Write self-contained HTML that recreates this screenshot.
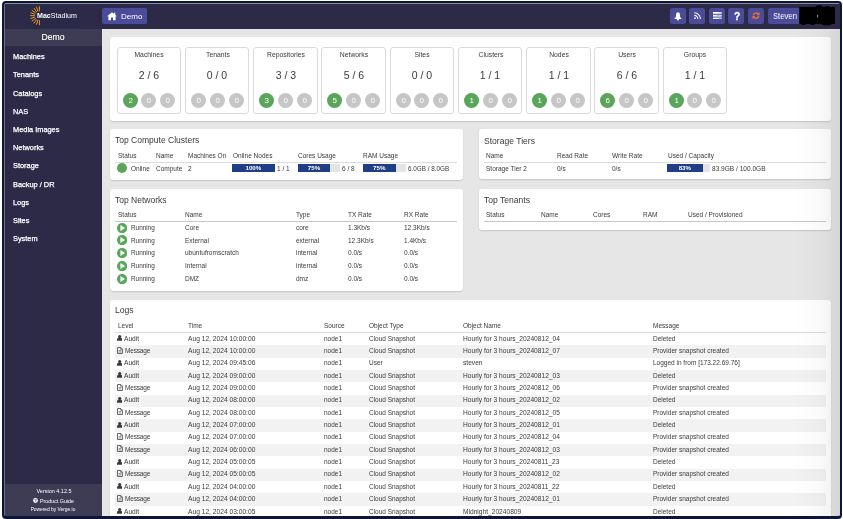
<!DOCTYPE html>
<html><head><meta charset="utf-8">
<style>
*{margin:0;padding:0;box-sizing:border-box}
html,body{width:843px;height:519px;overflow:hidden;background:#fff;font-family:"Liberation Sans",sans-serif}
.t,.circ{will-change:transform}
.a{position:absolute}
.t{position:absolute;white-space:nowrap;line-height:1}
.circ{width:15.4px;height:15.4px;border-radius:50%;color:#fff;font-size:8px;text-align:center;line-height:15.4px}
#frame{position:absolute;left:2px;top:1px;width:840px;height:518px;border:2.3px solid #0c1638;border-bottom-width:3px;border-radius:4px;box-shadow:0 0 0 12px #fff;z-index:50}
</style></head><body>
<div class="a" style="left:3.00px;top:2.00px;width:838.00px;height:516.00px;background:#e6e6e6;"></div>
<div class="a" style="left:4.00px;top:3.00px;width:836.00px;height:25.50px;background:#2d2a47;"></div>
<div class="a" style="left:4.00px;top:3.00px;width:836.00px;height:1.00px;background:#8c8c9c;"></div>
<div class="a" style="left:4.00px;top:28.50px;width:98.00px;height:488.00px;background:#2d2a47;"></div>
<div class="a" style="left:4.00px;top:29.00px;width:98.00px;height:17.00px;background:#3e3b55;"></div>
<div class="a" style="left:4.00px;top:484.00px;width:98.00px;height:33.00px;background:#3e3b55;"></div>
<div class="a" style="left:4.00px;top:3.00px;width:1.00px;height:514.00px;background:#70707e;"></div>
<div class="a" style="left:28.50px;top:4.50px;width:49.50px;height:23.00px;background:#2a2947;"></div>
<svg class="a" style="will-change:transform;left:0.00px;top:0.00px" width="60" height="30" viewBox="0 0 60 30"><line x1="39.40" y1="10.80" x2="39.40" y2="6.70" stroke="#f0a022" stroke-width="0.95" stroke-linecap="round"/><line x1="37.89" y1="11.04" x2="36.62" y2="7.14" stroke="#f0a022" stroke-width="0.95" stroke-linecap="round"/><line x1="36.52" y1="11.74" x2="34.11" y2="8.42" stroke="#f0a022" stroke-width="0.95" stroke-linecap="round"/><line x1="35.44" y1="12.82" x2="32.12" y2="10.41" stroke="#f0a022" stroke-width="0.95" stroke-linecap="round"/><line x1="34.74" y1="14.19" x2="30.84" y2="12.92" stroke="#f0a022" stroke-width="0.95" stroke-linecap="round"/><line x1="34.50" y1="15.70" x2="30.40" y2="15.70" stroke="#f0a022" stroke-width="0.95" stroke-linecap="round"/><line x1="34.74" y1="17.21" x2="30.84" y2="18.48" stroke="#f0a022" stroke-width="0.95" stroke-linecap="round"/><line x1="35.44" y1="18.58" x2="32.12" y2="20.99" stroke="#f0a022" stroke-width="0.95" stroke-linecap="round"/><line x1="36.52" y1="19.66" x2="34.11" y2="22.98" stroke="#f0a022" stroke-width="0.95" stroke-linecap="round"/><line x1="37.89" y1="20.36" x2="36.62" y2="24.26" stroke="#f0a022" stroke-width="0.95" stroke-linecap="round"/><line x1="39.40" y1="20.60" x2="39.40" y2="24.70" stroke="#f0a022" stroke-width="0.95" stroke-linecap="round"/></svg>
<div class="t" style="left:36.50px;top:13.00px;font-size:7.1px;color:#fff;"><b>Mac</b>Stadium</div>
<div class="a" style="left:102.00px;top:8.00px;width:45.00px;height:16.00px;background:#4a4c9a;border-radius:2px;"></div>
<svg class="a" style="will-change:transform;left:106.50px;top:11.50px" width="10" height="8.5" viewBox="0 0 10 8.5"><path d="M5 0.3 L0.2 4.3 L1.4 4.3 L1.4 8.3 L4 8.3 L4 5.6 L6 5.6 L6 8.3 L8.6 8.3 L8.6 4.3 L9.8 4.3 Z" fill="#fff"/><rect x="6.9" y="0.8" width="1.4" height="2.4" fill="#fff"/></svg>
<div class="t" style="left:120.80px;top:13.00px;font-size:8.0px;color:#fff;">Demo</div>
<div class="a" style="left:670.00px;top:8.00px;width:16.00px;height:16.00px;background:#4a4c9a;border-radius:2.5px;"></div>
<div class="a" style="left:689.20px;top:8.00px;width:16.00px;height:16.00px;background:#4a4c9a;border-radius:2.5px;"></div>
<div class="a" style="left:708.80px;top:8.00px;width:16.00px;height:16.00px;background:#4a4c9a;border-radius:2.5px;"></div>
<div class="a" style="left:728.40px;top:8.00px;width:16.00px;height:16.00px;background:#4a4c9a;border-radius:2.5px;"></div>
<div class="a" style="left:748.00px;top:8.00px;width:16.00px;height:16.00px;background:#4a4c9a;border-radius:2.5px;"></div>
<svg class="a" style="will-change:transform;left:674.20px;top:11.60px" width="8" height="8.6" viewBox="0 0 8 8.6"><path d="M4 0.2 C2.9 0.2 2.2 1.1 2.1 2.5 L1.9 4.6 C1.7 5.5 0.9 6.2 0.2 6.9 L7.8 6.9 C7.1 6.2 6.3 5.5 6.1 4.6 L5.9 2.5 C5.8 1.1 5.1 0.2 4 0.2 Z" fill="#fff"/><circle cx="4" cy="7.4" r="1.05" fill="#fff"/></svg>
<svg class="a" style="will-change:transform;left:693.80px;top:11.80px" width="7.2" height="7.2" viewBox="0 0 7.2 7.2"><circle cx="1" cy="6.1" r="0.95" fill="#fff"/><path d="M0.3 3.4 A3.4 3.4 0 0 1 3.8 6.9" stroke="#fff" stroke-width="1.1" fill="none"/><path d="M0.3 0.8 A6 6 0 0 1 6.4 6.9" stroke="#fff" stroke-width="1.1" fill="none"/></svg>
<svg class="a" style="will-change:transform;left:712.80px;top:12.00px" width="8.6" height="7.4" viewBox="0 0 8.6 7.4"><rect x="0" y="0" width="8.6" height="1.8" fill="#fff"/><rect x="0" y="2.8" width="8.6" height="1.8" fill="#fff"/><rect x="0" y="5.6" width="8.6" height="1.8" fill="#fff"/><rect x="5.6" y="0.4" width="2.4" height="1" fill="#b8b8e0"/><rect x="3.4" y="3.2" width="4.6" height="1" fill="#b8b8e0"/><rect x="5.6" y="6" width="2.4" height="1" fill="#b8b8e0"/></svg>
<div class="t" style="left:733.60px;top:12.00px;font-size:10.2px;color:#fff;font-weight:bold;-webkit-text-stroke:0.3px #fff;">?</div>
<svg class="a" style="will-change:transform;left:752.40px;top:12.20px" width="8" height="7.4" viewBox="0 0 8 7.4"><path d="M1.2 3.2 A3 3 0 0 1 6.4 2.2" stroke="#e8742c" stroke-width="1.4" fill="none"/><path d="M6.8 4.2 A3 3 0 0 1 1.6 5.2" stroke="#e8742c" stroke-width="1.4" fill="none"/><path d="M7.6 0.3 L7.6 3.3 L4.6 3.3 Z" fill="#e8742c"/><path d="M0.4 7.1 L0.4 4.1 L3.4 4.1 Z" fill="#e8742c"/></svg>
<div class="a" style="left:767.80px;top:8.00px;width:34.00px;height:16.00px;background:#4a4c9a;border-radius:2.5px;"></div>
<div class="t" style="left:772.80px;top:12.00px;font-size:8.8px;color:#fff;transform:scaleX(0.875);transform-origin:0 0;">Steven</div>
<svg class="a" style="will-change:transform;left:795.00px;top:2.00px" width="45" height="26" viewBox="0 0 45 26"><rect x="4.2" y="5" width="35.8" height="17" fill="#000"/><ellipse cx="24" cy="5.3" rx="3.6" ry="2" fill="#000"/><ellipse cx="32.2" cy="5.3" rx="2" ry="1.2" fill="#000"/><ellipse cx="8.5" cy="22" rx="2.4" ry="0.9" fill="#000"/><ellipse cx="17.5" cy="22" rx="2.4" ry="0.9" fill="#000"/><ellipse cx="31.5" cy="22.2" rx="5" ry="1.3" fill="#000"/><rect x="22.2" y="12.8" width="0.9" height="2.6" fill="#aaa"/></svg>
<div class="t" style="left:-46.80px;width:200px;text-align:center;top:33.00px;font-size:8.6px;color:#fff;-webkit-text-stroke:0.15px #fff;">Demo</div>
<div class="t" style="left:13.40px;top:53.00px;font-size:7.4px;color:#fff;-webkit-text-stroke:0.25px #fff;">Machines</div>
<div class="t" style="left:13.40px;top:71.00px;font-size:7.4px;color:#fff;-webkit-text-stroke:0.25px #fff;">Tenants</div>
<div class="t" style="left:13.40px;top:90.00px;font-size:7.4px;color:#fff;-webkit-text-stroke:0.25px #fff;">Catalogs</div>
<div class="t" style="left:13.40px;top:108.00px;font-size:7.4px;color:#fff;-webkit-text-stroke:0.25px #fff;">NAS</div>
<div class="t" style="left:13.40px;top:126.00px;font-size:7.4px;color:#fff;-webkit-text-stroke:0.25px #fff;">Media Images</div>
<div class="t" style="left:13.40px;top:144.00px;font-size:7.4px;color:#fff;-webkit-text-stroke:0.25px #fff;">Networks</div>
<div class="t" style="left:13.40px;top:162.00px;font-size:7.4px;color:#fff;-webkit-text-stroke:0.25px #fff;">Storage</div>
<div class="t" style="left:13.40px;top:181.00px;font-size:7.4px;color:#fff;-webkit-text-stroke:0.25px #fff;">Backup / DR</div>
<div class="t" style="left:13.40px;top:199.00px;font-size:7.4px;color:#fff;-webkit-text-stroke:0.25px #fff;">Logs</div>
<div class="t" style="left:13.40px;top:217.00px;font-size:7.4px;color:#fff;-webkit-text-stroke:0.25px #fff;">Sites</div>
<div class="t" style="left:13.40px;top:235.00px;font-size:7.4px;color:#fff;-webkit-text-stroke:0.25px #fff;">System</div>
<div class="t" style="left:-46.50px;width:200px;text-align:center;top:489.00px;font-size:5.47px;color:#fff;">Version 4.12.5</div>
<svg class="a" style="will-change:transform;left:32.50px;top:498.20px" width="5" height="5" viewBox="0 0 5 5"><circle cx="2.5" cy="2.5" r="2.4" fill="#fff"/><text x="2.5" y="4.2" font-size="4.3" font-weight="bold" text-anchor="middle" fill="#3e3b55" font-family="Liberation Sans">?</text></svg>
<div class="t" style="left:39.90px;top:499.00px;font-size:5.32px;color:#fff;">Product Guide</div>
<div class="t" style="left:-46.70px;width:200px;text-align:center;top:508.00px;font-size:4.85px;color:#fff;">Powered by Verge.io</div>
<div class="a" style="left:110.00px;top:37.00px;width:721.00px;height:84.00px;background:#fff;border-radius:3px;box-shadow:0 1px 1.5px rgba(0,0,0,.14);"></div>
<div class="a" style="left:110.00px;top:129.00px;width:353.00px;height:51.00px;background:#fff;border-radius:3px;box-shadow:0 1px 1.5px rgba(0,0,0,.14);"></div>
<div class="a" style="left:479.00px;top:129.00px;width:352.00px;height:50.00px;background:#fff;border-radius:3px;box-shadow:0 1px 1.5px rgba(0,0,0,.14);"></div>
<div class="a" style="left:110.00px;top:189.00px;width:353.00px;height:102.00px;background:#fff;border-radius:3px;box-shadow:0 1px 1.5px rgba(0,0,0,.14);"></div>
<div class="a" style="left:479.00px;top:189.00px;width:352.00px;height:41.00px;background:#fff;border-radius:3px;box-shadow:0 1px 1.5px rgba(0,0,0,.14);"></div>
<div class="a" style="left:110.00px;top:299.50px;width:721.00px;height:240.00px;background:#fff;border-radius:3px;box-shadow:0 1px 1.5px rgba(0,0,0,.14);"></div>
<div class="a" style="left:116.65px;top:46.90px;width:64.40px;height:66.70px;background:#fff;border:1px solid #dadada;border-radius:3px;"></div>
<div class="t" style="left:49.25px;width:200px;text-align:center;top:52.00px;font-size:6.8px;color:#3a3a3a;">Machines</div>
<div class="t" style="left:49.15px;width:200px;text-align:center;top:70.00px;font-size:10.5px;color:#3a3a3a;">2 / 6</div>
<div class="a circ" style="left:122.60px;top:92.5px;background:#5aa55a">2</div>
<div class="a circ" style="left:141.30px;top:92.5px;background:#c6c6c6">0</div>
<div class="a circ" style="left:160.30px;top:92.5px;background:#c6c6c6">0</div>
<div class="a" style="left:184.90px;top:46.90px;width:64.40px;height:66.70px;background:#fff;border:1px solid #dadada;border-radius:3px;"></div>
<div class="t" style="left:117.50px;width:200px;text-align:center;top:52.00px;font-size:6.8px;color:#3a3a3a;">Tenants</div>
<div class="t" style="left:117.40px;width:200px;text-align:center;top:70.00px;font-size:10.5px;color:#3a3a3a;">0 / 0</div>
<div class="a circ" style="left:190.85px;top:92.5px;background:#c6c6c6">0</div>
<div class="a circ" style="left:209.55px;top:92.5px;background:#c6c6c6">0</div>
<div class="a circ" style="left:228.55px;top:92.5px;background:#c6c6c6">0</div>
<div class="a" style="left:253.15px;top:46.90px;width:64.40px;height:66.70px;background:#fff;border:1px solid #dadada;border-radius:3px;"></div>
<div class="t" style="left:185.75px;width:200px;text-align:center;top:52.00px;font-size:6.8px;color:#3a3a3a;">Repositories</div>
<div class="t" style="left:185.65px;width:200px;text-align:center;top:70.00px;font-size:10.5px;color:#3a3a3a;">3 / 3</div>
<div class="a circ" style="left:259.10px;top:92.5px;background:#5aa55a">3</div>
<div class="a circ" style="left:277.80px;top:92.5px;background:#c6c6c6">0</div>
<div class="a circ" style="left:296.80px;top:92.5px;background:#c6c6c6">0</div>
<div class="a" style="left:321.40px;top:46.90px;width:64.40px;height:66.70px;background:#fff;border:1px solid #dadada;border-radius:3px;"></div>
<div class="t" style="left:254.00px;width:200px;text-align:center;top:52.00px;font-size:6.8px;color:#3a3a3a;">Networks</div>
<div class="t" style="left:253.90px;width:200px;text-align:center;top:70.00px;font-size:10.5px;color:#3a3a3a;">5 / 6</div>
<div class="a circ" style="left:327.35px;top:92.5px;background:#5aa55a">5</div>
<div class="a circ" style="left:346.05px;top:92.5px;background:#c6c6c6">0</div>
<div class="a circ" style="left:365.05px;top:92.5px;background:#c6c6c6">0</div>
<div class="a" style="left:389.65px;top:46.90px;width:64.40px;height:66.70px;background:#fff;border:1px solid #dadada;border-radius:3px;"></div>
<div class="t" style="left:322.25px;width:200px;text-align:center;top:52.00px;font-size:6.8px;color:#3a3a3a;">Sites</div>
<div class="t" style="left:322.15px;width:200px;text-align:center;top:70.00px;font-size:10.5px;color:#3a3a3a;">0 / 0</div>
<div class="a circ" style="left:395.60px;top:92.5px;background:#c6c6c6">0</div>
<div class="a circ" style="left:414.30px;top:92.5px;background:#c6c6c6">0</div>
<div class="a circ" style="left:433.30px;top:92.5px;background:#c6c6c6">0</div>
<div class="a" style="left:457.90px;top:46.90px;width:64.40px;height:66.70px;background:#fff;border:1px solid #dadada;border-radius:3px;"></div>
<div class="t" style="left:390.50px;width:200px;text-align:center;top:52.00px;font-size:6.8px;color:#3a3a3a;">Clusters</div>
<div class="t" style="left:390.40px;width:200px;text-align:center;top:70.00px;font-size:10.5px;color:#3a3a3a;">1 / 1</div>
<div class="a circ" style="left:463.85px;top:92.5px;background:#5aa55a">1</div>
<div class="a circ" style="left:482.55px;top:92.5px;background:#c6c6c6">0</div>
<div class="a circ" style="left:501.55px;top:92.5px;background:#c6c6c6">0</div>
<div class="a" style="left:526.15px;top:46.90px;width:64.40px;height:66.70px;background:#fff;border:1px solid #dadada;border-radius:3px;"></div>
<div class="t" style="left:458.75px;width:200px;text-align:center;top:52.00px;font-size:6.8px;color:#3a3a3a;">Nodes</div>
<div class="t" style="left:458.65px;width:200px;text-align:center;top:70.00px;font-size:10.5px;color:#3a3a3a;">1 / 1</div>
<div class="a circ" style="left:532.10px;top:92.5px;background:#5aa55a">1</div>
<div class="a circ" style="left:550.80px;top:92.5px;background:#c6c6c6">0</div>
<div class="a circ" style="left:569.80px;top:92.5px;background:#c6c6c6">0</div>
<div class="a" style="left:594.40px;top:46.90px;width:64.40px;height:66.70px;background:#fff;border:1px solid #dadada;border-radius:3px;"></div>
<div class="t" style="left:527.00px;width:200px;text-align:center;top:52.00px;font-size:6.8px;color:#3a3a3a;">Users</div>
<div class="t" style="left:526.90px;width:200px;text-align:center;top:70.00px;font-size:10.5px;color:#3a3a3a;">6 / 6</div>
<div class="a circ" style="left:600.35px;top:92.5px;background:#5aa55a">6</div>
<div class="a circ" style="left:619.05px;top:92.5px;background:#c6c6c6">0</div>
<div class="a circ" style="left:638.05px;top:92.5px;background:#c6c6c6">0</div>
<div class="a" style="left:662.65px;top:46.90px;width:64.40px;height:66.70px;background:#fff;border:1px solid #dadada;border-radius:3px;"></div>
<div class="t" style="left:595.25px;width:200px;text-align:center;top:52.00px;font-size:6.8px;color:#3a3a3a;">Groups</div>
<div class="t" style="left:595.15px;width:200px;text-align:center;top:70.00px;font-size:10.5px;color:#3a3a3a;">1 / 1</div>
<div class="a circ" style="left:668.60px;top:92.5px;background:#5aa55a">1</div>
<div class="a circ" style="left:687.30px;top:92.5px;background:#c6c6c6">0</div>
<div class="a circ" style="left:706.30px;top:92.5px;background:#c6c6c6">0</div>
<div class="t" style="left:115.00px;top:136.00px;font-size:8.52px;color:#3a3a3a;">Top Compute Clusters</div>
<div class="t" style="left:117.50px;top:153.00px;font-size:6.5px;color:#3a3a3a;">Status</div>
<div class="t" style="left:155.90px;top:153.00px;font-size:6.5px;color:#3a3a3a;">Name</div>
<div class="t" style="left:187.70px;top:153.00px;font-size:6.5px;color:#3a3a3a;">Machines On</div>
<div class="t" style="left:232.70px;top:153.00px;font-size:6.5px;color:#3a3a3a;">Online Nodes</div>
<div class="t" style="left:298.00px;top:153.00px;font-size:6.5px;color:#3a3a3a;">Cores Usage</div>
<div class="t" style="left:363.40px;top:153.00px;font-size:6.5px;color:#3a3a3a;">RAM Usage</div>
<div class="a" style="left:115.00px;top:162.00px;width:342.00px;height:0.70px;background:#dcdcdc;"></div>
<div class="a" style="left:117px;top:163.3px;width:10px;height:10px;border-radius:50%;background:#5aa55a"></div>
<div class="t" style="left:131.30px;top:166.00px;font-size:6.5px;color:#3a3a3a;">Online</div>
<div class="t" style="left:155.90px;top:166.00px;font-size:6.5px;color:#3a3a3a;">Compute</div>
<div class="t" style="left:188.00px;top:166.00px;font-size:6.5px;color:#3a3a3a;">2</div>
<div class="a" style="left:231.80px;top:164.00px;width:42.80px;height:8.30px;background:#e4e4e4;"></div>
<div class="a" style="left:231.80px;top:164.00px;width:42.80px;height:8.30px;background:#1f3e86;"></div>
<div class="t" style="left:231.80px;width:42.80px;top:164.8px;text-align:center;font-size:6.2px;font-weight:bold;color:#fff">100%</div>
<div class="t" style="left:277.00px;top:166.00px;font-size:6.5px;color:#3a3a3a;">1 / 1</div>
<div class="a" style="left:298.00px;top:164.00px;width:42.40px;height:8.30px;background:#e4e4e4;"></div>
<div class="a" style="left:298.00px;top:164.00px;width:32.00px;height:8.30px;background:#1f3e86;"></div>
<div class="t" style="left:298.00px;width:32.00px;top:164.8px;text-align:center;font-size:6.2px;font-weight:bold;color:#fff">75%</div>
<div class="t" style="left:342.40px;top:166.00px;font-size:6.5px;color:#3a3a3a;">6 / 8</div>
<div class="a" style="left:363.40px;top:164.00px;width:42.40px;height:8.30px;background:#e4e4e4;"></div>
<div class="a" style="left:363.40px;top:164.00px;width:32.60px;height:8.30px;background:#1f3e86;"></div>
<div class="t" style="left:363.40px;width:32.60px;top:164.8px;text-align:center;font-size:6.2px;font-weight:bold;color:#fff">75%</div>
<div class="t" style="left:407.80px;top:166.00px;font-size:6.33px;color:#3a3a3a;">6.0GB / 8.0GB</div>
<div class="t" style="left:484.00px;top:137.00px;font-size:8.57px;color:#3a3a3a;">Storage Tiers</div>
<div class="t" style="left:486.20px;top:153.00px;font-size:6.5px;color:#3a3a3a;">Name</div>
<div class="t" style="left:557.40px;top:153.00px;font-size:6.5px;color:#3a3a3a;">Read Rate</div>
<div class="t" style="left:611.50px;top:153.00px;font-size:6.5px;color:#3a3a3a;">Write Rate</div>
<div class="t" style="left:667.60px;top:153.00px;font-size:6.5px;color:#3a3a3a;">Used / Capacity</div>
<div class="a" style="left:484.00px;top:162.00px;width:342.00px;height:0.70px;background:#dcdcdc;"></div>
<div class="t" style="left:486.00px;top:166.00px;font-size:6.5px;color:#3a3a3a;">Storage Tier 2</div>
<div class="t" style="left:557.40px;top:166.00px;font-size:6.5px;color:#3a3a3a;">0/s</div>
<div class="t" style="left:611.50px;top:166.00px;font-size:6.5px;color:#3a3a3a;">0/s</div>
<div class="a" style="left:667.30px;top:164.00px;width:42.40px;height:8.30px;background:#e4e4e4;"></div>
<div class="a" style="left:667.30px;top:164.00px;width:35.70px;height:8.30px;background:#1f3e86;"></div>
<div class="t" style="left:667.30px;width:35.70px;top:164.8px;text-align:center;font-size:6.2px;font-weight:bold;color:#fff">83%</div>
<div class="t" style="left:711.50px;top:166.00px;font-size:6.55px;color:#3a3a3a;">83.9GB / 100.0GB</div>
<div class="t" style="left:115.00px;top:196.00px;font-size:8.52px;color:#3a3a3a;">Top Networks</div>
<div class="t" style="left:117.50px;top:212.00px;font-size:6.5px;color:#3a3a3a;">Status</div>
<div class="t" style="left:184.70px;top:212.00px;font-size:6.5px;color:#3a3a3a;">Name</div>
<div class="t" style="left:295.80px;top:212.00px;font-size:6.5px;color:#3a3a3a;">Type</div>
<div class="t" style="left:347.60px;top:212.00px;font-size:6.5px;color:#3a3a3a;">TX Rate</div>
<div class="t" style="left:403.50px;top:212.00px;font-size:6.5px;color:#3a3a3a;">RX Rate</div>
<div class="a" style="left:115.00px;top:220.80px;width:342.00px;height:1.10px;background:#c8c8c8;"></div>
<svg class="a" style="will-change:transform;left:117.00px;top:222.60px" width="10.2" height="10.2" viewBox="0 0 10.2 10.2"><circle cx="5.1" cy="5.1" r="5.1" fill="#57a659"/><path d="M3.4 2.1 L8.2 5.1 L3.4 8.1 Z" fill="#fff"/></svg>
<div class="t" style="left:131.40px;top:225.00px;font-size:6.36px;color:#3a3a3a;">Running</div>
<div class="t" style="left:184.70px;top:225.00px;font-size:6.5px;color:#3a3a3a;">Core</div>
<div class="t" style="left:295.80px;top:225.00px;font-size:6.5px;color:#3a3a3a;">core</div>
<div class="t" style="left:347.60px;top:225.00px;font-size:6.5px;color:#3a3a3a;">1.3Kb/s</div>
<div class="t" style="left:403.50px;top:225.00px;font-size:6.5px;color:#3a3a3a;">12.3Kb/s</div>
<svg class="a" style="will-change:transform;left:117.00px;top:235.40px" width="10.2" height="10.2" viewBox="0 0 10.2 10.2"><circle cx="5.1" cy="5.1" r="5.1" fill="#57a659"/><path d="M3.4 2.1 L8.2 5.1 L3.4 8.1 Z" fill="#fff"/></svg>
<div class="t" style="left:131.40px;top:238.00px;font-size:6.36px;color:#3a3a3a;">Running</div>
<div class="t" style="left:184.70px;top:238.00px;font-size:6.5px;color:#3a3a3a;">External</div>
<div class="t" style="left:295.80px;top:238.00px;font-size:6.5px;color:#3a3a3a;">external</div>
<div class="t" style="left:347.60px;top:238.00px;font-size:6.5px;color:#3a3a3a;">12.3Kb/s</div>
<div class="t" style="left:403.50px;top:238.00px;font-size:6.5px;color:#3a3a3a;">1.4Kb/s</div>
<svg class="a" style="will-change:transform;left:117.00px;top:248.20px" width="10.2" height="10.2" viewBox="0 0 10.2 10.2"><circle cx="5.1" cy="5.1" r="5.1" fill="#57a659"/><path d="M3.4 2.1 L8.2 5.1 L3.4 8.1 Z" fill="#fff"/></svg>
<div class="t" style="left:131.40px;top:250.00px;font-size:6.36px;color:#3a3a3a;">Running</div>
<div class="t" style="left:184.70px;top:250.00px;font-size:6.5px;color:#3a3a3a;">ubuntufromscratch</div>
<div class="t" style="left:295.80px;top:250.00px;font-size:6.5px;color:#3a3a3a;">internal</div>
<div class="t" style="left:347.60px;top:250.00px;font-size:6.5px;color:#3a3a3a;">0.0/s</div>
<div class="t" style="left:403.50px;top:250.00px;font-size:6.5px;color:#3a3a3a;">0.0/s</div>
<svg class="a" style="will-change:transform;left:117.00px;top:261.00px" width="10.2" height="10.2" viewBox="0 0 10.2 10.2"><circle cx="5.1" cy="5.1" r="5.1" fill="#57a659"/><path d="M3.4 2.1 L8.2 5.1 L3.4 8.1 Z" fill="#fff"/></svg>
<div class="t" style="left:131.40px;top:263.00px;font-size:6.36px;color:#3a3a3a;">Running</div>
<div class="t" style="left:184.70px;top:263.00px;font-size:6.5px;color:#3a3a3a;">Internal</div>
<div class="t" style="left:295.80px;top:263.00px;font-size:6.5px;color:#3a3a3a;">internal</div>
<div class="t" style="left:347.60px;top:263.00px;font-size:6.5px;color:#3a3a3a;">0.0/s</div>
<div class="t" style="left:403.50px;top:263.00px;font-size:6.5px;color:#3a3a3a;">0.0/s</div>
<svg class="a" style="will-change:transform;left:117.00px;top:273.80px" width="10.2" height="10.2" viewBox="0 0 10.2 10.2"><circle cx="5.1" cy="5.1" r="5.1" fill="#57a659"/><path d="M3.4 2.1 L8.2 5.1 L3.4 8.1 Z" fill="#fff"/></svg>
<div class="t" style="left:131.40px;top:276.00px;font-size:6.36px;color:#3a3a3a;">Running</div>
<div class="t" style="left:184.70px;top:276.00px;font-size:6.5px;color:#3a3a3a;">DMZ</div>
<div class="t" style="left:295.80px;top:276.00px;font-size:6.5px;color:#3a3a3a;">dmz</div>
<div class="t" style="left:347.60px;top:276.00px;font-size:6.5px;color:#3a3a3a;">0.0/s</div>
<div class="t" style="left:403.50px;top:276.00px;font-size:6.5px;color:#3a3a3a;">0.0/s</div>
<div class="t" style="left:484.00px;top:196.00px;font-size:8.57px;color:#3a3a3a;">Top Tenants</div>
<div class="t" style="left:486.20px;top:212.00px;font-size:6.5px;color:#3a3a3a;">Status</div>
<div class="t" style="left:541.00px;top:212.00px;font-size:6.5px;color:#3a3a3a;">Name</div>
<div class="t" style="left:592.80px;top:212.00px;font-size:6.5px;color:#3a3a3a;">Cores</div>
<div class="t" style="left:643.00px;top:212.00px;font-size:6.5px;color:#3a3a3a;">RAM</div>
<div class="t" style="left:688.30px;top:212.00px;font-size:6.5px;color:#3a3a3a;">Used / Provisioned</div>
<div class="a" style="left:484.00px;top:220.80px;width:342.00px;height:0.80px;background:#c8c8c8;"></div>
<div class="t" style="left:115.30px;top:306.00px;font-size:8.6px;color:#3a3a3a;">Logs</div>
<div class="t" style="left:118.00px;top:323.00px;font-size:6.5px;color:#3a3a3a;">Level</div>
<div class="t" style="left:188.00px;top:323.00px;font-size:6.5px;color:#3a3a3a;">Time</div>
<div class="t" style="left:323.70px;top:323.00px;font-size:6.5px;color:#3a3a3a;">Source</div>
<div class="t" style="left:368.50px;top:323.00px;font-size:6.5px;color:#3a3a3a;">Object Type</div>
<div class="t" style="left:462.80px;top:323.00px;font-size:6.5px;color:#3a3a3a;">Object Name</div>
<div class="t" style="left:653.30px;top:323.00px;font-size:6.5px;color:#3a3a3a;">Message</div>
<div class="a" style="left:115.00px;top:332.20px;width:711.00px;height:0.70px;background:#dcdcdc;"></div>
<svg class="a" style="will-change:transform;left:116.90px;top:335.10px" width="5.4" height="5.8" viewBox="0 0 5.4 5.8"><circle cx="2.7" cy="1.6" r="1.6" fill="#3a3a3a"/><path d="M0 5.8 L0 4.7 C0 3.4 0.9 2.8 1.6 2.8 L3.8 2.8 C4.5 2.8 5.4 3.4 5.4 4.7 L5.4 5.8 Z" fill="#3a3a3a"/></svg>
<div class="t" style="left:124.00px;top:336.00px;font-size:6.6px;color:#3a3a3a;">Audit</div>
<div class="t" style="left:188.00px;top:336.00px;font-size:6.67px;color:#3a3a3a;">Aug 12, 2024 10:00:00</div>
<div class="t" style="left:323.70px;top:336.00px;font-size:6.47px;color:#3a3a3a;">node1</div>
<div class="t" style="left:368.50px;top:336.00px;font-size:6.46px;color:#3a3a3a;">Cloud Snapshot</div>
<div class="t" style="left:462.80px;top:336.00px;font-size:6.63px;color:#3a3a3a;">Hourly for 3 hours_20240812_04</div>
<div class="t" style="left:653.30px;top:336.00px;font-size:6.5px;color:#3a3a3a;">Deleted</div>
<div class="a" style="left:115.00px;top:345.20px;width:711.00px;height:12.35px;background:#f2f2f2;"></div>
<svg class="a" style="will-change:transform;left:117.00px;top:346.55px" width="6" height="7" viewBox="0 0 6 7"><path d="M0.5 0.5 L3.8 0.5 L5.4 2.1 L5.4 6.5 L0.5 6.5 Z" stroke="#555" stroke-width="0.9" fill="none"/><path d="M3.6 0.6 L3.6 2.3 L5.3 2.3" stroke="#555" stroke-width="0.7" fill="none"/><path d="M1.6 3.6 L4.3 3.6 M1.6 5 L4.3 5" stroke="#666" stroke-width="0.7"/></svg>
<div class="t" style="left:124.90px;top:348.00px;font-size:6.5px;color:#3a3a3a;letter-spacing:-0.17px;">Message</div>
<div class="t" style="left:188.00px;top:348.00px;font-size:6.67px;color:#3a3a3a;">Aug 12, 2024 10:00:00</div>
<div class="t" style="left:323.70px;top:348.00px;font-size:6.47px;color:#3a3a3a;">node1</div>
<div class="t" style="left:368.50px;top:348.00px;font-size:6.46px;color:#3a3a3a;">Cloud Snapshot</div>
<div class="t" style="left:462.80px;top:348.00px;font-size:6.63px;color:#3a3a3a;">Hourly for 3 hours_20240812_07</div>
<div class="t" style="left:653.30px;top:348.00px;font-size:6.5px;color:#3a3a3a;">Provider snapshot created</div>
<svg class="a" style="will-change:transform;left:116.90px;top:359.80px" width="5.4" height="5.8" viewBox="0 0 5.4 5.8"><circle cx="2.7" cy="1.6" r="1.6" fill="#3a3a3a"/><path d="M0 5.8 L0 4.7 C0 3.4 0.9 2.8 1.6 2.8 L3.8 2.8 C4.5 2.8 5.4 3.4 5.4 4.7 L5.4 5.8 Z" fill="#3a3a3a"/></svg>
<div class="t" style="left:124.00px;top:360.00px;font-size:6.6px;color:#3a3a3a;">Audit</div>
<div class="t" style="left:188.00px;top:360.00px;font-size:6.67px;color:#3a3a3a;">Aug 12, 2024 09:45:06</div>
<div class="t" style="left:323.70px;top:360.00px;font-size:6.47px;color:#3a3a3a;">node1</div>
<div class="t" style="left:368.50px;top:360.00px;font-size:6.46px;color:#3a3a3a;">User</div>
<div class="t" style="left:462.80px;top:360.00px;font-size:6.63px;color:#3a3a3a;">steven</div>
<div class="t" style="left:653.30px;top:360.00px;font-size:6.5px;color:#3a3a3a;">Logged in from [173.22.69.76]</div>
<div class="a" style="left:115.00px;top:369.90px;width:711.00px;height:12.35px;background:#f2f2f2;"></div>
<svg class="a" style="will-change:transform;left:116.90px;top:372.15px" width="5.4" height="5.8" viewBox="0 0 5.4 5.8"><circle cx="2.7" cy="1.6" r="1.6" fill="#3a3a3a"/><path d="M0 5.8 L0 4.7 C0 3.4 0.9 2.8 1.6 2.8 L3.8 2.8 C4.5 2.8 5.4 3.4 5.4 4.7 L5.4 5.8 Z" fill="#3a3a3a"/></svg>
<div class="t" style="left:124.00px;top:373.00px;font-size:6.6px;color:#3a3a3a;">Audit</div>
<div class="t" style="left:188.00px;top:373.00px;font-size:6.67px;color:#3a3a3a;">Aug 12, 2024 09:00:00</div>
<div class="t" style="left:323.70px;top:373.00px;font-size:6.47px;color:#3a3a3a;">node1</div>
<div class="t" style="left:368.50px;top:373.00px;font-size:6.46px;color:#3a3a3a;">Cloud Snapshot</div>
<div class="t" style="left:462.80px;top:373.00px;font-size:6.63px;color:#3a3a3a;">Hourly for 3 hours_20240812_03</div>
<div class="t" style="left:653.30px;top:373.00px;font-size:6.5px;color:#3a3a3a;">Deleted</div>
<svg class="a" style="will-change:transform;left:117.00px;top:383.60px" width="6" height="7" viewBox="0 0 6 7"><path d="M0.5 0.5 L3.8 0.5 L5.4 2.1 L5.4 6.5 L0.5 6.5 Z" stroke="#555" stroke-width="0.9" fill="none"/><path d="M3.6 0.6 L3.6 2.3 L5.3 2.3" stroke="#555" stroke-width="0.7" fill="none"/><path d="M1.6 3.6 L4.3 3.6 M1.6 5 L4.3 5" stroke="#666" stroke-width="0.7"/></svg>
<div class="t" style="left:124.90px;top:385.00px;font-size:6.5px;color:#3a3a3a;letter-spacing:-0.17px;">Message</div>
<div class="t" style="left:188.00px;top:385.00px;font-size:6.67px;color:#3a3a3a;">Aug 12, 2024 09:00:00</div>
<div class="t" style="left:323.70px;top:385.00px;font-size:6.47px;color:#3a3a3a;">node1</div>
<div class="t" style="left:368.50px;top:385.00px;font-size:6.46px;color:#3a3a3a;">Cloud Snapshot</div>
<div class="t" style="left:462.80px;top:385.00px;font-size:6.63px;color:#3a3a3a;">Hourly for 3 hours_20240812_06</div>
<div class="t" style="left:653.30px;top:385.00px;font-size:6.5px;color:#3a3a3a;">Provider snapshot created</div>
<div class="a" style="left:115.00px;top:394.60px;width:711.00px;height:12.35px;background:#f2f2f2;"></div>
<svg class="a" style="will-change:transform;left:116.90px;top:396.85px" width="5.4" height="5.8" viewBox="0 0 5.4 5.8"><circle cx="2.7" cy="1.6" r="1.6" fill="#3a3a3a"/><path d="M0 5.8 L0 4.7 C0 3.4 0.9 2.8 1.6 2.8 L3.8 2.8 C4.5 2.8 5.4 3.4 5.4 4.7 L5.4 5.8 Z" fill="#3a3a3a"/></svg>
<div class="t" style="left:124.00px;top:397.00px;font-size:6.6px;color:#3a3a3a;">Audit</div>
<div class="t" style="left:188.00px;top:397.00px;font-size:6.67px;color:#3a3a3a;">Aug 12, 2024 08:00:00</div>
<div class="t" style="left:323.70px;top:397.00px;font-size:6.47px;color:#3a3a3a;">node1</div>
<div class="t" style="left:368.50px;top:397.00px;font-size:6.46px;color:#3a3a3a;">Cloud Snapshot</div>
<div class="t" style="left:462.80px;top:397.00px;font-size:6.63px;color:#3a3a3a;">Hourly for 3 hours_20240812_02</div>
<div class="t" style="left:653.30px;top:397.00px;font-size:6.5px;color:#3a3a3a;">Deleted</div>
<svg class="a" style="will-change:transform;left:117.00px;top:408.30px" width="6" height="7" viewBox="0 0 6 7"><path d="M0.5 0.5 L3.8 0.5 L5.4 2.1 L5.4 6.5 L0.5 6.5 Z" stroke="#555" stroke-width="0.9" fill="none"/><path d="M3.6 0.6 L3.6 2.3 L5.3 2.3" stroke="#555" stroke-width="0.7" fill="none"/><path d="M1.6 3.6 L4.3 3.6 M1.6 5 L4.3 5" stroke="#666" stroke-width="0.7"/></svg>
<div class="t" style="left:124.90px;top:410.00px;font-size:6.5px;color:#3a3a3a;letter-spacing:-0.17px;">Message</div>
<div class="t" style="left:188.00px;top:410.00px;font-size:6.67px;color:#3a3a3a;">Aug 12, 2024 08:00:00</div>
<div class="t" style="left:323.70px;top:410.00px;font-size:6.47px;color:#3a3a3a;">node1</div>
<div class="t" style="left:368.50px;top:410.00px;font-size:6.46px;color:#3a3a3a;">Cloud Snapshot</div>
<div class="t" style="left:462.80px;top:410.00px;font-size:6.63px;color:#3a3a3a;">Hourly for 3 hours_20240812_05</div>
<div class="t" style="left:653.30px;top:410.00px;font-size:6.5px;color:#3a3a3a;">Provider snapshot created</div>
<div class="a" style="left:115.00px;top:419.30px;width:711.00px;height:12.35px;background:#f2f2f2;"></div>
<svg class="a" style="will-change:transform;left:116.90px;top:421.55px" width="5.4" height="5.8" viewBox="0 0 5.4 5.8"><circle cx="2.7" cy="1.6" r="1.6" fill="#3a3a3a"/><path d="M0 5.8 L0 4.7 C0 3.4 0.9 2.8 1.6 2.8 L3.8 2.8 C4.5 2.8 5.4 3.4 5.4 4.7 L5.4 5.8 Z" fill="#3a3a3a"/></svg>
<div class="t" style="left:124.00px;top:422.00px;font-size:6.6px;color:#3a3a3a;">Audit</div>
<div class="t" style="left:188.00px;top:422.00px;font-size:6.67px;color:#3a3a3a;">Aug 12, 2024 07:00:00</div>
<div class="t" style="left:323.70px;top:422.00px;font-size:6.47px;color:#3a3a3a;">node1</div>
<div class="t" style="left:368.50px;top:422.00px;font-size:6.46px;color:#3a3a3a;">Cloud Snapshot</div>
<div class="t" style="left:462.80px;top:422.00px;font-size:6.63px;color:#3a3a3a;">Hourly for 3 hours_20240812_01</div>
<div class="t" style="left:653.30px;top:422.00px;font-size:6.5px;color:#3a3a3a;">Deleted</div>
<svg class="a" style="will-change:transform;left:117.00px;top:433.00px" width="6" height="7" viewBox="0 0 6 7"><path d="M0.5 0.5 L3.8 0.5 L5.4 2.1 L5.4 6.5 L0.5 6.5 Z" stroke="#555" stroke-width="0.9" fill="none"/><path d="M3.6 0.6 L3.6 2.3 L5.3 2.3" stroke="#555" stroke-width="0.7" fill="none"/><path d="M1.6 3.6 L4.3 3.6 M1.6 5 L4.3 5" stroke="#666" stroke-width="0.7"/></svg>
<div class="t" style="left:124.90px;top:434.00px;font-size:6.5px;color:#3a3a3a;letter-spacing:-0.17px;">Message</div>
<div class="t" style="left:188.00px;top:434.00px;font-size:6.67px;color:#3a3a3a;">Aug 12, 2024 07:00:00</div>
<div class="t" style="left:323.70px;top:434.00px;font-size:6.47px;color:#3a3a3a;">node1</div>
<div class="t" style="left:368.50px;top:434.00px;font-size:6.46px;color:#3a3a3a;">Cloud Snapshot</div>
<div class="t" style="left:462.80px;top:434.00px;font-size:6.63px;color:#3a3a3a;">Hourly for 3 hours_20240812_04</div>
<div class="t" style="left:653.30px;top:434.00px;font-size:6.5px;color:#3a3a3a;">Provider snapshot created</div>
<div class="a" style="left:115.00px;top:444.00px;width:711.00px;height:12.35px;background:#f2f2f2;"></div>
<svg class="a" style="will-change:transform;left:117.00px;top:445.35px" width="6" height="7" viewBox="0 0 6 7"><path d="M0.5 0.5 L3.8 0.5 L5.4 2.1 L5.4 6.5 L0.5 6.5 Z" stroke="#555" stroke-width="0.9" fill="none"/><path d="M3.6 0.6 L3.6 2.3 L5.3 2.3" stroke="#555" stroke-width="0.7" fill="none"/><path d="M1.6 3.6 L4.3 3.6 M1.6 5 L4.3 5" stroke="#666" stroke-width="0.7"/></svg>
<div class="t" style="left:124.90px;top:447.00px;font-size:6.5px;color:#3a3a3a;letter-spacing:-0.17px;">Message</div>
<div class="t" style="left:188.00px;top:447.00px;font-size:6.67px;color:#3a3a3a;">Aug 12, 2024 06:00:00</div>
<div class="t" style="left:323.70px;top:447.00px;font-size:6.47px;color:#3a3a3a;">node1</div>
<div class="t" style="left:368.50px;top:447.00px;font-size:6.46px;color:#3a3a3a;">Cloud Snapshot</div>
<div class="t" style="left:462.80px;top:447.00px;font-size:6.63px;color:#3a3a3a;">Hourly for 3 hours_20240812_03</div>
<div class="t" style="left:653.30px;top:447.00px;font-size:6.5px;color:#3a3a3a;">Provider snapshot created</div>
<svg class="a" style="will-change:transform;left:116.90px;top:458.60px" width="5.4" height="5.8" viewBox="0 0 5.4 5.8"><circle cx="2.7" cy="1.6" r="1.6" fill="#3a3a3a"/><path d="M0 5.8 L0 4.7 C0 3.4 0.9 2.8 1.6 2.8 L3.8 2.8 C4.5 2.8 5.4 3.4 5.4 4.7 L5.4 5.8 Z" fill="#3a3a3a"/></svg>
<div class="t" style="left:124.00px;top:459.00px;font-size:6.6px;color:#3a3a3a;">Audit</div>
<div class="t" style="left:188.00px;top:459.00px;font-size:6.67px;color:#3a3a3a;">Aug 12, 2024 05:00:05</div>
<div class="t" style="left:323.70px;top:459.00px;font-size:6.47px;color:#3a3a3a;">node1</div>
<div class="t" style="left:368.50px;top:459.00px;font-size:6.46px;color:#3a3a3a;">Cloud Snapshot</div>
<div class="t" style="left:462.80px;top:459.00px;font-size:6.63px;color:#3a3a3a;">Hourly for 3 hours_20240811_23</div>
<div class="t" style="left:653.30px;top:459.00px;font-size:6.5px;color:#3a3a3a;">Deleted</div>
<div class="a" style="left:115.00px;top:468.70px;width:711.00px;height:12.35px;background:#f2f2f2;"></div>
<svg class="a" style="will-change:transform;left:117.00px;top:470.05px" width="6" height="7" viewBox="0 0 6 7"><path d="M0.5 0.5 L3.8 0.5 L5.4 2.1 L5.4 6.5 L0.5 6.5 Z" stroke="#555" stroke-width="0.9" fill="none"/><path d="M3.6 0.6 L3.6 2.3 L5.3 2.3" stroke="#555" stroke-width="0.7" fill="none"/><path d="M1.6 3.6 L4.3 3.6 M1.6 5 L4.3 5" stroke="#666" stroke-width="0.7"/></svg>
<div class="t" style="left:124.90px;top:471.00px;font-size:6.5px;color:#3a3a3a;letter-spacing:-0.17px;">Message</div>
<div class="t" style="left:188.00px;top:471.00px;font-size:6.67px;color:#3a3a3a;">Aug 12, 2024 05:00:05</div>
<div class="t" style="left:323.70px;top:471.00px;font-size:6.47px;color:#3a3a3a;">node1</div>
<div class="t" style="left:368.50px;top:471.00px;font-size:6.46px;color:#3a3a3a;">Cloud Snapshot</div>
<div class="t" style="left:462.80px;top:471.00px;font-size:6.63px;color:#3a3a3a;">Hourly for 3 hours_20240812_02</div>
<div class="t" style="left:653.30px;top:471.00px;font-size:6.5px;color:#3a3a3a;">Provider snapshot created</div>
<svg class="a" style="will-change:transform;left:116.90px;top:483.30px" width="5.4" height="5.8" viewBox="0 0 5.4 5.8"><circle cx="2.7" cy="1.6" r="1.6" fill="#3a3a3a"/><path d="M0 5.8 L0 4.7 C0 3.4 0.9 2.8 1.6 2.8 L3.8 2.8 C4.5 2.8 5.4 3.4 5.4 4.7 L5.4 5.8 Z" fill="#3a3a3a"/></svg>
<div class="t" style="left:124.00px;top:484.00px;font-size:6.6px;color:#3a3a3a;">Audit</div>
<div class="t" style="left:188.00px;top:484.00px;font-size:6.67px;color:#3a3a3a;">Aug 12, 2024 04:00:00</div>
<div class="t" style="left:323.70px;top:484.00px;font-size:6.47px;color:#3a3a3a;">node1</div>
<div class="t" style="left:368.50px;top:484.00px;font-size:6.46px;color:#3a3a3a;">Cloud Snapshot</div>
<div class="t" style="left:462.80px;top:484.00px;font-size:6.63px;color:#3a3a3a;">Hourly for 3 hours_20240811_22</div>
<div class="t" style="left:653.30px;top:484.00px;font-size:6.5px;color:#3a3a3a;">Deleted</div>
<div class="a" style="left:115.00px;top:493.40px;width:711.00px;height:12.35px;background:#f2f2f2;"></div>
<svg class="a" style="will-change:transform;left:117.00px;top:494.75px" width="6" height="7" viewBox="0 0 6 7"><path d="M0.5 0.5 L3.8 0.5 L5.4 2.1 L5.4 6.5 L0.5 6.5 Z" stroke="#555" stroke-width="0.9" fill="none"/><path d="M3.6 0.6 L3.6 2.3 L5.3 2.3" stroke="#555" stroke-width="0.7" fill="none"/><path d="M1.6 3.6 L4.3 3.6 M1.6 5 L4.3 5" stroke="#666" stroke-width="0.7"/></svg>
<div class="t" style="left:124.90px;top:496.00px;font-size:6.5px;color:#3a3a3a;letter-spacing:-0.17px;">Message</div>
<div class="t" style="left:188.00px;top:496.00px;font-size:6.67px;color:#3a3a3a;">Aug 12, 2024 04:00:00</div>
<div class="t" style="left:323.70px;top:496.00px;font-size:6.47px;color:#3a3a3a;">node1</div>
<div class="t" style="left:368.50px;top:496.00px;font-size:6.46px;color:#3a3a3a;">Cloud Snapshot</div>
<div class="t" style="left:462.80px;top:496.00px;font-size:6.63px;color:#3a3a3a;">Hourly for 3 hours_20240812_01</div>
<div class="t" style="left:653.30px;top:496.00px;font-size:6.5px;color:#3a3a3a;">Provider snapshot created</div>
<svg class="a" style="will-change:transform;left:116.90px;top:508.00px" width="5.4" height="5.8" viewBox="0 0 5.4 5.8"><circle cx="2.7" cy="1.6" r="1.6" fill="#3a3a3a"/><path d="M0 5.8 L0 4.7 C0 3.4 0.9 2.8 1.6 2.8 L3.8 2.8 C4.5 2.8 5.4 3.4 5.4 4.7 L5.4 5.8 Z" fill="#3a3a3a"/></svg>
<div class="t" style="left:124.00px;top:509.00px;font-size:6.6px;color:#3a3a3a;">Audit</div>
<div class="t" style="left:188.00px;top:509.00px;font-size:6.67px;color:#3a3a3a;">Aug 12, 2024 03:00:05</div>
<div class="t" style="left:323.70px;top:509.00px;font-size:6.47px;color:#3a3a3a;">node1</div>
<div class="t" style="left:368.50px;top:509.00px;font-size:6.46px;color:#3a3a3a;">Cloud Snapshot</div>
<div class="t" style="left:462.80px;top:509.00px;font-size:6.63px;color:#3a3a3a;">Midnight_20240809</div>
<div class="t" style="left:653.30px;top:509.00px;font-size:6.5px;color:#3a3a3a;">Deleted</div>
<div class="a" style="left:795.00px;top:28.50px;width:45.00px;height:489.00px;background:linear-gradient(90deg,rgba(0,0,0,0),rgba(0,0,0,.025) 60%,rgba(0,0,0,.07));z-index:40;"></div>
<div id="frame"></div>
</body></html>
